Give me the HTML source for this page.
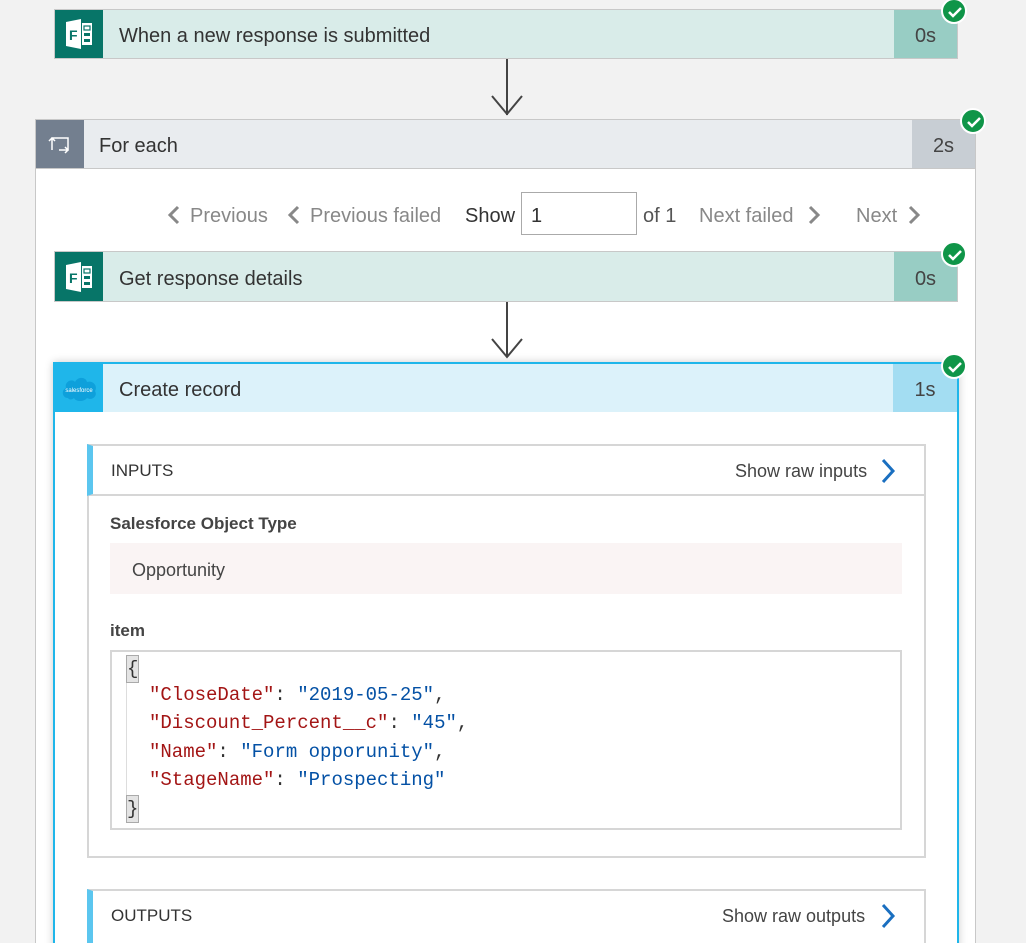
<!DOCTYPE html>
<html style="overflow:hidden"><head><style>
*{margin:0;padding:0;box-sizing:border-box}
html,body{width:1026px;height:943px;overflow:hidden}
body{background:#f2f2f2;font-family:"Liberation Sans",sans-serif;position:relative;color:#333}
.a{position:absolute}
.card{position:absolute;border:1px solid #c8c8c8;display:flex;align-items:center}
.ic{width:48px;height:100%;display:flex;align-items:center;justify-content:center}
.t{flex:1;font-size:20px;padding-left:16px;padding-top:5px;color:#333}
.d{width:63px;height:100%;display:flex;align-items:center;justify-content:center;font-size:20px;color:#444;padding-top:5px}
.chk{position:absolute;width:26px;height:26px;border-radius:50%;background:#0f9548;border:2px solid #fff}
.chk svg{position:absolute;left:5px;top:6px}
.arrow{position:absolute;width:2px;background:#444}
.nav{position:absolute;top:205px;font-size:20px;color:#888}
.mono{font-family:"Liberation Mono",monospace;font-size:19px;position:absolute;white-space:pre}
.k{color:#a31515}.v{color:#0451a5}
</style></head><body>
<!-- card 1 -->
<div class="card" style="left:54px;top:9px;width:904px;height:50px;background:#d9ece9">
<div class="ic" style="background:#077568"><svg width="30" height="32" viewBox="0 0 30 32"><path d="M2 4 L17 1 L17 31 L2 28 Z" fill="#fff"/><text x="5" y="22" font-size="14" font-weight="bold" fill="#077568" font-family="Liberation Sans">F</text><rect x="18" y="5" width="10" height="22" fill="#fff"/><rect x="20" y="8" width="6" height="4" fill="none" stroke="#077568" stroke-width="1.2"/><rect x="20" y="15" width="6" height="3" fill="#077568"/><rect x="20" y="21" width="6" height="3" fill="#077568"/></svg></div>
<div class="t">When a new response is submitted</div>
<div class="d" style="background:#98cdc4">0s</div></div>
<div class="chk" style="left:941px;top:-2px"><svg width="14" height="12"><path d="M1 6 L5 10 L13 2" stroke="#fff" stroke-width="2.5" fill="none"/></svg></div>
<div class="arrow" style="left:506px;top:59px;height:56px"></div>
<svg class="a" style="left:490px;top:94px" width="34" height="24"><path d="M2 2 L17 20 L32 2" stroke="#444" stroke-width="2" fill="none"/></svg>
<!-- for each -->
<div class="a" style="left:35px;top:119px;width:941px;height:830px;background:#fff;border:1px solid #c8c8c8"></div>
<div class="card" style="left:35px;top:119px;width:941px;height:50px;background:#e9ecef">
<div class="ic" style="background:#737f8f"><svg width="24" height="20" viewBox="0 0 24 20"><path d="M4 16 V4 H20 V16 H11 M1 7 L4 4 L7 7 M17 13 L20 16 L17 19" stroke="#fff" stroke-width="1.5" fill="none"/></svg></div>
<div class="t" style="padding-left:15px">For each</div>
<div class="d" style="background:#c8ced4">2s</div></div>
<div class="chk" style="left:960px;top:108px"><svg width="14" height="12"><path d="M1 6 L5 10 L13 2" stroke="#fff" stroke-width="2.5" fill="none"/></svg></div>
<!-- nav -->
<svg class="a" style="left:167px;top:205px" width="14" height="20"><path d="M11 2 L3 10 L11 18" stroke="#888" stroke-width="3" fill="none"/></svg>
<div class="nav" style="left:190px">Previous</div>
<svg class="a" style="left:287px;top:205px" width="14" height="20"><path d="M11 2 L3 10 L11 18" stroke="#888" stroke-width="3" fill="none"/></svg>
<div class="nav" style="left:310px">Previous failed</div>
<div class="nav" style="left:465px;color:#333">Show</div>
<div class="a" style="left:521px;top:192px;width:116px;height:43px;border:1px solid #aaa;background:#fff;font-size:20px;padding:12px 0 0 9px">1</div>
<div class="nav" style="left:643px;color:#555">of 1</div>
<div class="nav" style="left:699px">Next failed</div>
<svg class="a" style="left:807px;top:205px" width="14" height="20"><path d="M3 2 L11 10 L3 18" stroke="#888" stroke-width="3" fill="none"/></svg>
<div class="nav" style="left:856px">Next</div>
<svg class="a" style="left:907px;top:205px" width="14" height="20"><path d="M3 2 L11 10 L3 18" stroke="#888" stroke-width="3" fill="none"/></svg>
<!-- card 2 -->
<div class="card" style="left:54px;top:251px;width:904px;height:51px;background:#d9ece9">
<div class="ic" style="background:#077568"><svg width="30" height="32" viewBox="0 0 30 32"><path d="M2 4 L17 1 L17 31 L2 28 Z" fill="#fff"/><text x="5" y="22" font-size="14" font-weight="bold" fill="#077568" font-family="Liberation Sans">F</text><rect x="18" y="5" width="10" height="22" fill="#fff"/><rect x="20" y="8" width="6" height="4" fill="none" stroke="#077568" stroke-width="1.2"/><rect x="20" y="15" width="6" height="3" fill="#077568"/><rect x="20" y="21" width="6" height="3" fill="#077568"/></svg></div>
<div class="t">Get response details</div>
<div class="d" style="background:#98cdc4">0s</div></div>
<div class="chk" style="left:941px;top:241px"><svg width="14" height="12"><path d="M1 6 L5 10 L13 2" stroke="#fff" stroke-width="2.5" fill="none"/></svg></div>
<div class="arrow" style="left:506px;top:302px;height:55px"></div>
<svg class="a" style="left:490px;top:337px" width="34" height="24"><path d="M2 2 L17 20 L32 2" stroke="#444" stroke-width="2" fill="none"/></svg>
<!-- create record -->
<div class="a" style="left:53px;top:362px;width:906px;height:600px;background:#fff;border:2px solid #1fb6ea;box-shadow:0 0 8px rgba(0,0,0,.2)"></div>
<div class="card" style="left:55px;top:364px;width:902px;height:48px;background:#dcf2fa;border:none">
<div class="ic" style="background:#1fb6ea"><svg width="38" height="28" viewBox="0 0 38 28"><path d="M8 24 C2 24 1 16 6 14 C4 8 12 4 15 8 C18 2 26 3 27 8 C33 6 38 12 35 17 C38 22 32 27 27 24 C24 28 16 28 14 24 C12 26 9 26 8 24Z" fill="#0ea0db"/><text x="19" y="18" font-size="6" text-anchor="middle" fill="#fff" font-family="Liberation Sans">salesforce</text></svg></div>
<div class="t">Create record</div>
<div class="d" style="background:#a3ddf2;width:64px">1s</div></div>
<div class="chk" style="left:941px;top:353px"><svg width="14" height="12"><path d="M1 6 L5 10 L13 2" stroke="#fff" stroke-width="2.5" fill="none"/></svg></div>
<!-- inputs -->
<div class="a" style="left:87px;top:444px;width:839px;height:414px;border:2px solid #d6d6d6"></div>
<div class="a" style="left:87px;top:444px;width:839px;height:52px;border:2px solid #d6d6d6;border-left:6px solid #5bc6ef"></div>
<div class="a" style="left:111px;top:461px;font-size:17px;color:#333">INPUTS</div>
<div class="a" style="left:735px;top:461px;font-size:18px;color:#444">Show raw inputs</div>
<svg class="a" style="left:880px;top:458px" width="16" height="26"><path d="M3 2 L13 13 L3 24" stroke="#1a6fc0" stroke-width="3" fill="none"/></svg>
<div class="a" style="left:110px;top:514px;font-size:17px;color:#444;font-weight:bold">Salesforce Object Type</div>
<div class="a" style="left:110px;top:543px;width:792px;height:51px;background:#faf4f4;font-size:18px;padding:17px 0 0 22px;color:#444">Opportunity</div>
<div class="a" style="left:110px;top:621px;font-size:17px;font-weight:bold;color:#444">item</div>
<div class="a" style="left:110px;top:650px;width:792px;height:180px;border:2px solid #d6d6d6;background:#fff"></div>
<div class="a" style="left:126px;top:656px;width:1px;height:165px;background:#ddd"></div>
<div class="mono" style="left:126px;top:655px;background:#e4e4e4;border:1px solid #aaa;line-height:26px">{</div>
<div class="mono" style="left:149px;top:681px;line-height:28.4px"><span class="k">"CloseDate"</span>: <span class="v">"2019-05-25"</span>,
<span class="k">"Discount_Percent__c"</span>: <span class="v">"45"</span>,
<span class="k">"Name"</span>: <span class="v">"Form opporunity"</span>,
<span class="k">"StageName"</span>: <span class="v">"Prospecting"</span></div>
<div class="mono" style="left:126px;top:795px;background:#e4e4e4;border:1px solid #aaa;line-height:26px">}</div>
<!-- outputs -->
<div class="a" style="left:87px;top:889px;width:839px;height:60px;border:2px solid #d6d6d6;border-left:6px solid #5bc6ef"></div>
<div class="a" style="left:111px;top:906px;font-size:17px;color:#333">OUTPUTS</div>
<div class="a" style="left:722px;top:906px;font-size:18px;color:#444">Show raw outputs</div>
<svg class="a" style="left:880px;top:903px" width="16" height="26"><path d="M3 2 L13 13 L3 24" stroke="#1a6fc0" stroke-width="3" fill="none"/></svg>
</body></html>
